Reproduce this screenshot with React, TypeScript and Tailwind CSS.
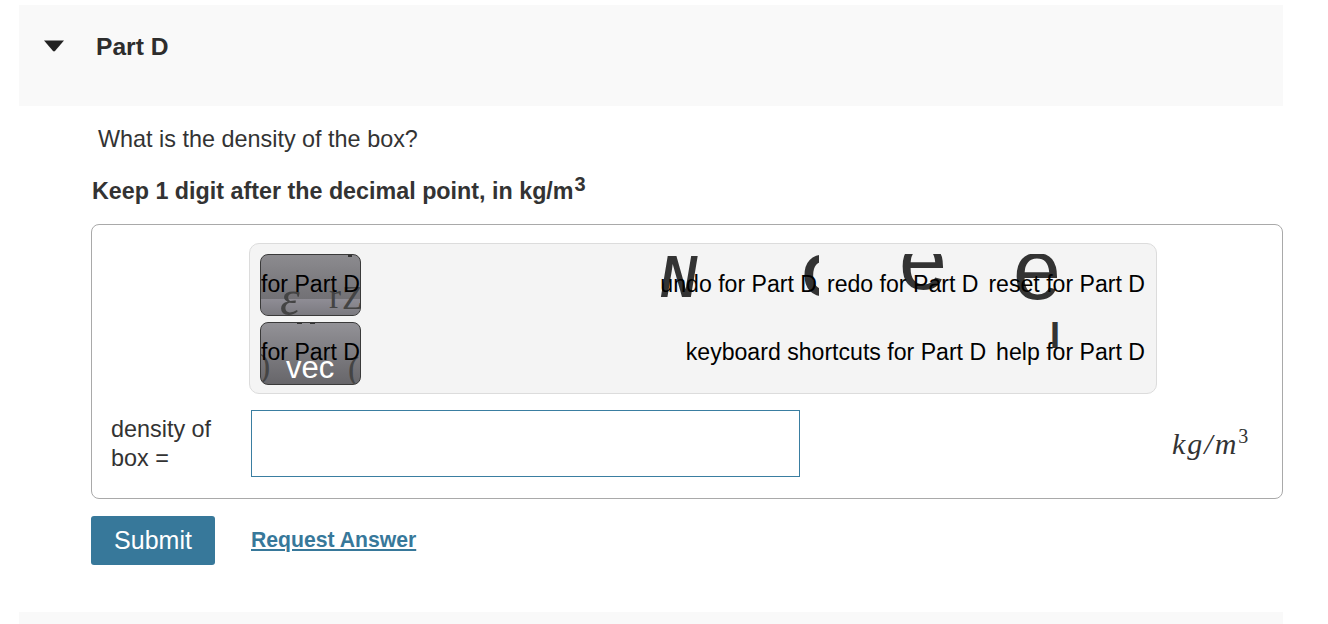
const sans = "font-['Liberation_Sans',Arial,sans-serif]";
const serif = "font-['Liberation_Serif',serif]";

const ToolButton = ({ className, children }: { className: string; children: React.ReactNode }) => (
  <div className={`relative flex w-[101px] items-center justify-center overflow-hidden rounded-lg border border-[#3a3a3a] ${className}`}>
    {children}
  </div>
);

const Glyph = ({ className, children }: { className: string; children: React.ReactNode }) => (
  <span className={`absolute leading-none ${className}`}>{children}</span>
);

export default function App() {
  return (
    <div className={`h-[624px] w-[1328px] overflow-hidden bg-white pl-[19px] pt-[5px] text-[#333] ${sans}`}>
      <div className="flex h-[101px] w-[1264px] items-center gap-[32px] bg-[#f9f9f9] pb-[18px] pl-[25px]">
        <svg width="20" height="12" viewBox="0 0 20 12" className="mt-[-2px] shrink-0" aria-hidden="true">
          <path d="M0 0.5H20L11 11a1.5 1.5 0 0 1-2 0Z" fill="#222" />
        </svg>
        <h2 className="text-[24.6px] font-bold leading-[28px] text-[#2d2d2d]">Part D</h2>
      </div>

      <div className="w-[1264px] pl-[72px]">
        <p className="ml-[7px] mt-[19px] text-[23.4px] leading-[28px]">What is the density of the box?</p>
        <p className="ml-[1px] mt-[24px] text-[23.3px] font-bold leading-[28px]">
          Keep 1 digit after the decimal point, in kg/m
          <sup className="relative top-[-8px] ml-[1px] align-baseline text-[20px]">3</sup>
        </p>

        <div className="mt-[19px] h-[275px] w-[1192px] rounded-lg border border-[#a9a9a9] px-[19px] pt-[18px]">
          <div className="relative ml-[138px] flex h-[151px] w-[908px] flex-col gap-[6px] rounded-[10px] border border-[#dcdcdc] bg-[#f4f4f4] pl-[10px] pr-[11px] pt-[10px] text-[23.1px] leading-[28px] text-black">
            <div className="absolute inset-x-0 top-[10px] h-[46px] overflow-hidden text-[#333]">
              <Glyph className="left-[410px] top-[-7px] origin-left scale-x-[0.85] text-[60px] font-bold italic">N</Glyph>
              <div className="absolute left-[552px] top-0 h-[46px] w-[17px] overflow-hidden">
                <Glyph className="left-0 top-[-8px] text-[60px] font-bold">C</Glyph>
              </div>
              <Glyph className="left-[649px] top-[-38px] text-[86px]">e</Glyph>
              <Glyph className="left-[763px] top-[-28px] text-[86px]">e</Glyph>
            </div>
            <Glyph className="left-[800px] top-[74px] text-[36px] font-bold text-[#333]">I</Glyph>

            <div className="relative flex items-center justify-between">
              <ToolButton className="h-[62px] bg-gradient-to-b from-[#8c8b8f] via-[#737276] via-70% to-[#6b6a6e] pb-[2px]">
                <div className="absolute inset-x-0 bottom-0 h-[16px] bg-gradient-to-b from-[#8f8d95] to-[#7b7a80]" />
                <div className="absolute right-[8px] top-0 h-[2px] w-[4px] bg-[#333]" />
                <Glyph className={`left-[19px] top-[18px] text-[50px] italic text-[#444] ${serif}`}>ε</Glyph>
                <Glyph className={`left-[68px] top-[23px] text-[36px] text-[#444] ${serif}`}>r</Glyph>
                <Glyph className={`left-[81px] top-[26px] text-[34px] text-[#444] ${serif}`}>Z</Glyph>
                <span className="relative whitespace-nowrap">for Part D</span>
              </ToolButton>
              <div className="mb-[2px] flex gap-[10px]">
                <span>undo for Part D</span>
                <span>redo for Part D</span>
                <span>reset for Part D</span>
              </div>
            </div>
            <div className="relative flex items-center justify-between">
              <ToolButton className="h-[63px] bg-gradient-to-b from-[#939297] to-[#67666a] pb-[3px]">
                <div className="absolute left-[36px] top-0 h-[1px] w-[5px] bg-[#333]" />
                <div className="absolute left-[49px] top-0 h-[1px] w-[5px] bg-[#333]" />
                <Glyph className={`left-[-2px] top-[26px] text-[34px] text-[#444] ${serif}`}>)</Glyph>
                <Glyph className={`left-[87px] top-[29px] text-[34px] text-[#444] ${serif}`}>(</Glyph>
                <span className="relative whitespace-nowrap">for Part D</span>
                <Glyph className="left-[25px] top-[29px] text-[31px] text-white">vec</Glyph>
              </ToolButton>
              <div className="mb-[4px] flex gap-[10px]">
                <span>keyboard shortcuts for Part D</span>
                <span>help for Part D</span>
              </div>
            </div>
          </div>

          <div className="mt-[16px] flex items-center">
            <label className="w-[115px] text-[23.4px] leading-[29px]">density of box =</label>
            <input className="ml-[25px] h-[67px] w-[549px] border border-[#3a7ea1] bg-white" aria-label="density of box" />
            <span className={`ml-[372px] text-[30px] italic leading-none tracking-[2px] ${serif}`}>
              kg/m<sup className="relative top-[-11px] align-baseline text-[20px] not-italic">3</sup>
            </span>
          </div>
        </div>

        <div className="mt-[17px] flex items-center gap-[36px]">
          <button className="h-[49px] w-[124px] rounded-[3px] bg-[#37789a] text-[25px] text-white">Submit</button>
          <a className="mt-[-1px] text-[21.2px] font-bold text-[#37789a] underline">Request Answer</a>
        </div>
      </div>

      <div className="mt-[47px] h-[40px] w-[1264px] bg-[#f9f9f9]" />
    </div>
  );
}
